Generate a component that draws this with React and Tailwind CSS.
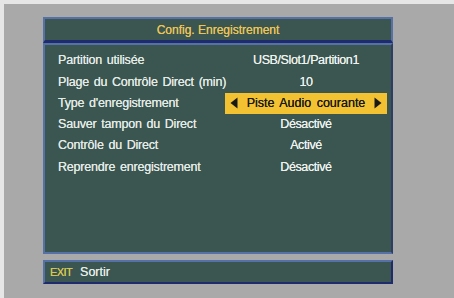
export default function App() {
  const rows = [
    ["Partition utilisée", "USB/Slot1/Partition1"],
    ["Plage du Contrôle Direct (min)", "10"],
    ["Type d'enregistrement", "Piste Audio courante", true],
    ["Sauver tampon du Direct", "Désactivé"],
    ["Contrôle du Direct", "Activé"],
    ["Reprendre enregistrement", "Désactivé"],
  ];

  return (
    <div className="w-[454px] h-[298px] bg-[#a9a9a9] border-t-4 border-l-4 border-[#e6e6e6] overflow-hidden font-['Liberation_Sans',Arial,sans-serif]">
      <div className="ml-[39px] mt-[13px] w-[350px]">
        <div className="h-[26px] bg-[#3b5651] border-t-2 border-x-2 border-[#5670a8] border-b-[3px] border-b-[#1e2c6e] flex items-center justify-center">
          <span className="text-[12px] text-[#ecc455] [text-shadow:0_0_0.5px_#ecc455]">Config. Enregistrement</span>
        </div>
        <div className="h-[211px] bg-[#3b5651] border-t-2 border-x-2 border-b-2 border-[#5670a8] border-r-[#2c3d66] pt-[5px]">
          {rows.map(([label, value, active]) => (
            <div key={label} className="h-[21.3px] flex items-center text-[12.5px] text-[#e3ebe6] [text-shadow:0_0_0.5px_#e3ebe6]">
              <div className="w-[180px] pl-[13px] shrink-0 whitespace-nowrap tracking-[-0.2px] [word-spacing:1.5px]">{label}</div>
              {active ? (
                <div className="w-[162px] h-[21px] bg-[#f2c232] text-[#1a1a14] [text-shadow:0_0_0.4px_#1a1a14] flex items-center justify-between px-[5px]">
                  <svg width="8" height="12" viewBox="0 0 8 12"><path d="M7.5 0.5 L0.5 6 L7.5 11.5 Z" fill="#1a1a14" /></svg>
                  <span className="[word-spacing:2px]">{value}</span>
                  <svg width="8" height="12" viewBox="0 0 8 12"><path d="M0.5 0.5 L7.5 6 L0.5 11.5 Z" fill="#1a1a14" /></svg>
                </div>
              ) : (
                <div className="w-[162px] text-center whitespace-nowrap text-[#eef2ee] tracking-[-0.4px]">{value}</div>
              )}
            </div>
          ))}
        </div>
        <div className="mt-[6px] h-[24px] bg-[#3b5651] border-2 border-[#5670a8] border-b-[#1e2c6e] border-r-[#1e2c6e] flex items-center pl-[5px] gap-[8px]">
          <span className="text-[11px] text-[#d9c650] tracking-[-0.6px] [text-shadow:0_0_0.5px_#d9c650]">EXIT</span>
          <span className="text-[12.5px] text-[#e3ebe6] [text-shadow:0_0_0.5px_#e3ebe6]">Sortir</span>
        </div>
      </div>
    </div>
  );
}
